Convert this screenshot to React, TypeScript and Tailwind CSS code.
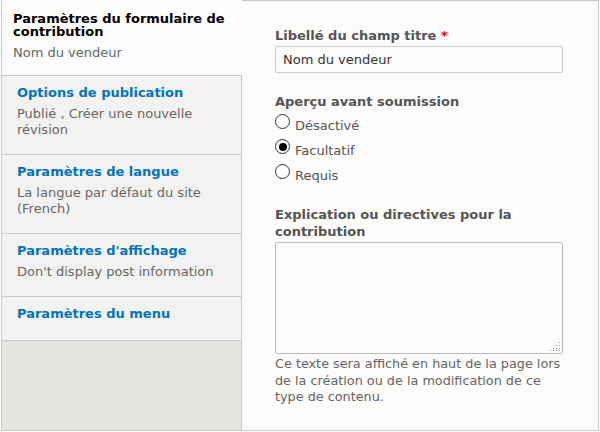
import React from 'react';

const tabs = [
  { title: 'Options de publication', summary: 'Publié , Créer une nouvelle révision' },
  { title: 'Paramètres de langue', summary: 'La langue par défaut du site (French)' },
  { title: "Paramètres d'affichage", summary: "Don't display post information" },
  { title: 'Paramètres du menu', summary: '' },
];

const Radio: React.FC<{ label: string; checked?: boolean }> = ({ label, checked }) => (
  <div className="flex items-start h-[25px]">
    <span className="w-[15px] h-[15px] rounded-full border border-[#333] bg-white flex items-center justify-center shrink-0">
      {checked && <span className="w-[8px] h-[8px] rounded-full bg-black" />}
    </span>
    <span className="ml-[5px] mt-[4px] text-[13px] leading-[16px] text-[#555]">{label}</span>
  </div>
);

export default function App() {
  return (
    <div className="w-[600px] h-[432px] bg-white font-['DejaVu_Sans',sans-serif]">
      <div className="flex w-[598px] h-[431px] ml-px">
        {/* tab list */}
        <ul className="w-[241px] flex flex-col bg-[#e6e5e1] border-l border-b border-[#c8c8c8]">
          <li className="bg-[#fcfcfa] border-b border-[#c8c8c8] pl-[11px] pr-2 pt-[12px] h-[76px]">
            <div className="text-[13px] leading-[13px] font-bold text-black">Paramètres du formulaire de contribution</div>
            <div className="mt-[7px] text-[13px] leading-[16px] text-[#666]">Nom du vendeur</div>
          </li>
          {tabs.map((t) => (
            <li
              key={t.title}
              className={
                t.summary
                  ? 'bg-[#f2f2f0] border-b border-r border-[#c8c8c8] pl-[15px] pr-2 pt-[10px] pb-[16px]'
                  : 'bg-[#f2f2f0] border-b border-r border-[#c8c8c8] pl-[15px] pr-2 pt-[10px] pb-[20px]'
              }
            >
              <div className="text-[13px] leading-[13px] font-bold text-[#0074bd]">{t.title}</div>
              {t.summary && (
                <div className="mt-[7px] text-[13px] leading-[16px] text-[#666]">{t.summary}</div>
              )}
            </li>
          ))}
          <li className="flex-1 border-r border-[#c8c8c8]" />
        </ul>

        {/* pane */}
        <div className="flex-1 bg-[#fcfcfa] border-t border-r border-b border-[#c8c8c8] pl-[33px] pr-[33px] pt-[26px]">
          <label className="block text-[13px] leading-[18px] font-bold text-[#555]">
            Libellé du champ titre <span className="text-[#e00]">*</span>
          </label>
          <div className="mt-[1px] w-[288px] h-[27px] border border-[#ccc] rounded-[2px] bg-[#fcfcfa] px-[7px] flex items-center text-[13px] text-[#333]">
            Nom du vendeur
          </div>

          <div className="mt-[20px] text-[13px] leading-[18px] font-bold text-[#555]">Aperçu avant soumission</div>
          <div className="mt-[3px]">
            <Radio label="Désactivé" />
            <Radio label="Facultatif" checked />
            <Radio label="Requis" />
          </div>

          <div className="mt-[17px] text-[13px] leading-[17px] font-bold text-[#555]">
            Explication ou directives pour la contribution
          </div>
          <div className="relative mt-[2px] w-[288px] h-[112px] border border-[#bbb] rounded-[2px] bg-[#fcfcfa]">
            <svg className="absolute right-[1px] bottom-[1px]" width="12" height="12" viewBox="0 0 12 12">
              {[
                [10, 2], [10, 5], [10, 8], [10, 10], [7, 5], [7, 8], [7, 10], [4, 8], [4, 10], [1, 10],
              ].map(([x, y], i) => (
                <rect key={i} x={x} y={y} width="1" height="1" fill="#999" />
              ))}
            </svg>
          </div>
          <p className="mt-[2px] text-[12.8px] leading-[16.5px] text-[#666] w-[288px]">
            Ce texte sera affiché en haut de la page lors de la création ou de la modification de ce type de contenu.
          </p>
        </div>
      </div>
    </div>
  );
}
